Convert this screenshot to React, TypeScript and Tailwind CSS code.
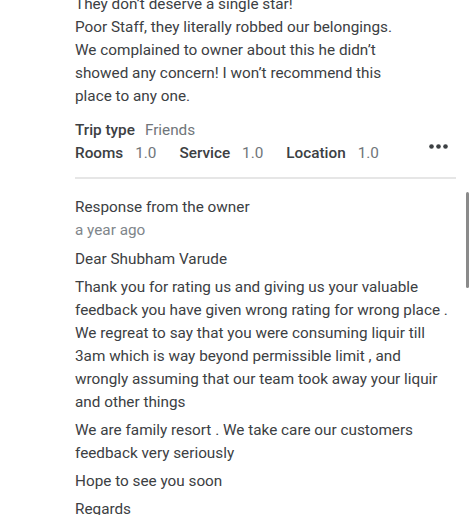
const review = [
  'They don’t deserve a single star!',
  'Poor Staff, they literally robbed our belongings.',
  'We complained to owner about this he didn’t',
  'showed any concern! I won’t recommend this',
  'place to any one.',
];

const ratings = [
  { label: 'Rooms', value: '1.0' },
  { label: 'Service', value: '1.0' },
  { label: 'Location', value: '1.0' },
];

const reply = [
  ['Thank you for rating us and giving us your valuable', 'feedback you have given wrong rating for wrong place .', 'We regreat to say that you were consuming liquir till', '3am which is way beyond permissible limit , and', 'wrongly assuming that our team took away your liquir', 'and other things'],
  ['We are family resort . We take care our customers', 'feedback very seriously'],
  ['Hope to see you soon'],
  ['Regards'],
];

function Dots() {
  return (
    <svg width="19" height="5" viewBox="0 0 19 5" className="ml-auto mr-[8px] -mt-[14px] text-[#3c4043]">
      <circle cx="2.5" cy="2.5" r="2.3" fill="currentColor" />
      <circle cx="9.5" cy="2.5" r="2.3" fill="currentColor" />
      <circle cx="16.5" cy="2.5" r="2.3" fill="currentColor" />
    </svg>
  );
}

export default function App() {
  return (
    <div
      className="relative h-[515px] w-[474px] overflow-hidden bg-white text-[15.3px] leading-[23px] text-[#3c4043]"
      style={{ fontFamily: 'Roboto, "Liberation Sans", sans-serif' }}
    >
      {/* scrollbar */}
      <div className="absolute right-[5px] top-[192px] h-[96px] w-[3px] rounded-full bg-[#8a8a8a]" />

      <div className="-mt-[7px] pl-[75px] pr-[18px]">
        <div>
          {review.map((line) => (
            <div key={line}>{line}</div>
          ))}
        </div>

        <div className="mt-[11px] flex gap-[10px]">
          <span className="font-medium">Trip type</span>
          <span className="text-[#70757a]">Friends</span>
        </div>

        <div className="flex items-center">
          <div className="flex gap-[23px]">
            {ratings.map((r) => (
              <div key={r.label} className="flex gap-[12px]">
                <span className="font-medium">{r.label}</span>
                <span className="text-[#70757a]">{r.value}</span>
              </div>
            ))}
          </div>
          <Dots />
        </div>

        <div className="mt-[12px] h-[2px] bg-[#e6e6e6]" />

        <div className="mt-[17px]">
          <div>Response from the owner</div>
          <div className="text-[#80868b]">a year ago</div>
          <div className="mt-[6px]">Dear Shubham Varude</div>
          {reply.map((p, i) => (
            <div key={i} className="mt-[5px] whitespace-nowrap">
              {p.map((line) => (
                <div key={line}>{line}</div>
              ))}
            </div>
          ))}
        </div>
      </div>
    </div>
  );
}
